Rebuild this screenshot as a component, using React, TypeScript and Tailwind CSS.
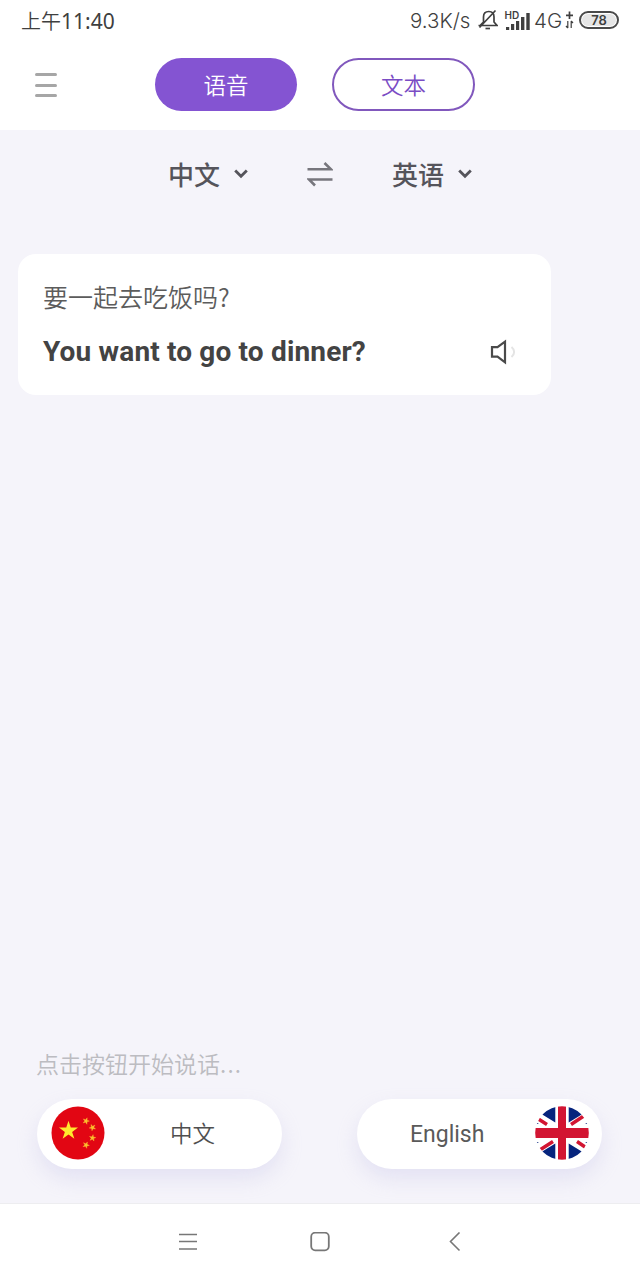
import React from 'react';

const SignalBars = () => (
  <svg width="28" height="24" viewBox="504 6 28 24" fill="#3f3f3f">
    <text x="504.5" y="17" fontSize="10" fontWeight="600" fontFamily="Inter, sans-serif">HD</text>
    <rect x="506" y="25" width="3.2" height="3" />
    <rect x="511" y="22" width="3.2" height="6" />
    <rect x="516" y="19" width="3.2" height="9" />
    <rect x="521" y="15" width="3.4" height="13" />
    <rect x="526.3" y="11" width="3.4" height="17" />
  </svg>
);

const MutedBell = () => (
  <svg width="20" height="22" viewBox="478 9 20 22" fill="none" stroke="#3f3f3f" strokeWidth="1.7">
    <path d="M478.5 25.5h18.5l-3-3.5v-5c0-3.500-2-5.500-5.200-5.500s-5.300 2-5.300 5.500v5l-3 3M479.500 27.500l16-17" />
    <path d="M485.500 28.500h4.500" />
  </svg>
);

const DataArrows = () => (
  <svg width="9" height="20" viewBox="565 10 9 20" fill="none" stroke="#3f3f3f">
    <path d="M569.500 11.500v7.500M566 15.300h7" strokeWidth="1.7" />
    <path d="M567.800 21v7M566 26l1.800 2M571.200 28v-7M573 23l-1.800-2" strokeWidth="1.200" />
  </svg>
);

const StatusBar = () => (
  <div className="flex h-10 shrink-0 items-center pl-[21px] pr-[21px] text-[20px] text-[#3f3f3f]">
    <span className="mt-[3px] whitespace-nowrap font-[350]">
      上午<span className="font-['Noto_Sans'] text-[21px] font-normal">11:40</span>
    </span>
    <div className="ml-auto flex items-center whitespace-nowrap font-[Inter]">
      <span className="mt-0.5 w-[68px] text-[20.5px] font-[350]">9.3K/s</span>
      <MutedBell />
      <span className="ml-1.5"><SignalBars /></span>
      <span className="ml-[2px] mt-0.5 w-[31px] text-[20.5px] font-[350]">4G</span>
      <DataArrows />
      <span className="ml-[5px] flex h-[18px] w-10 items-center justify-center rounded-full border-2 border-[#4a4a4a] bg-white p-px text-[13px] font-semibold leading-none">
        <span className="flex h-full w-full items-center justify-center rounded-full bg-[#e6e6e6]">78</span>
      </span>
    </div>
  </div>
);

const Header = () => (
  <div className="flex h-[90px] shrink-0 items-start bg-white pl-[35px] pt-[18px] text-[22.5px] font-[350]">
    <button className="mt-[15px] flex flex-col gap-[7.5px]">
      <span className="h-[3px] w-[22px] rounded-sm bg-[#a6a6a6]" />
      <span className="h-[3px] w-[22px] rounded-sm bg-[#a6a6a6]" />
      <span className="h-[3px] w-[22px] rounded-sm bg-[#a6a6a6]" />
    </button>
    <button className="ml-[98px] h-[53px] w-[142px] rounded-full bg-[#8454d2] text-white">语音</button>
    <button className="ml-[35px] h-[53px] w-[143px] rounded-full border-2 border-[#8158bd] text-[#7a4cc4]">文本</button>
  </div>
);

interface LanguageProps {
  label: string;
}

const LanguageSelect: React.FC<LanguageProps> = ({ label }) => (
  <button className="flex items-center gap-[14px] text-[26px] font-medium text-[#55545b]">
    <span className="-mt-px">{label}</span>
    <svg width="14" height="10" viewBox="0 0 14 10" fill="none" stroke="#55545b" strokeWidth="2.800">
      <path d="M1.200 1.500L7 7.200l5.800-5.700" />
    </svg>
  </button>
);

const LanguageBar = () => (
  <div className="flex h-[88px] items-center pl-[168px]">
    <LanguageSelect label="中文" />
    <svg className="ml-[59px] mr-[59px]" width="26" height="26" viewBox="0 0 26 26" fill="none" stroke="#77767d" strokeWidth="2.600">
      <path d="M.5 8.300h23.500L17.500 2M25.500 18.500H2l6 6" />
    </svg>
    <LanguageSelect label="英语" />
  </div>
);

const SpeakerIcon = () => (
  <svg width="28" height="26" viewBox="0 0 28 26" fill="none">
    <path d="M3 8.200h5.500L16 2.700v20.600L8.500 17.600H3z" stroke="#4a4a4a" strokeWidth="2.200" />
    <path d="M22.500 8c3.500 2.800 3.500 7.200 0 10" stroke="#e4e4e4" strokeWidth="2" />
  </svg>
);

const TranslationCard = () => (
  <div className="ml-[18px] mt-[36px] h-[141px] w-[533px] rounded-[18px] bg-white pl-[25px] pt-[24px]">
    <p className="text-[25px] font-[350] leading-9 text-[#5c5c5c]">要一起去吃饭吗?</p>
    <div className="mt-[20px] flex items-center justify-between pr-[34px]">
      <p className="whitespace-nowrap font-[Roboto] text-[28px] font-bold leading-9 tracking-[0.16px] text-[#434343]">
        You want to go to dinner?
      </p>
      <SpeakerIcon />
    </div>
  </div>
);

const STAR = '0,-10 2.245,-3.090 9.511,-3.090 3.633,1.180 5.878,8.090 0,3.820 -5.878,8.090 -3.633,1.180 -9.511,-3.090 -2.245,-3.090';

const smallStars = [
  { x: 35, y: 15, angle: 20 },
  { x: 41.500, y: 21.500, angle: 45 },
  { x: 41.500, y: 32, angle: 10 },
  { x: 35, y: 39, angle: 25 },
];

const ChinaFlag = () => (
  <svg width="54" height="54" viewBox="0 0 54 54">
    <circle cx="27" cy="27" r="26.500" fill="#e20613" />
    <polygon points={STAR} fill="#ffe92e" transform="translate(17.500 24.700)" />
    {smallStars.map((star) => (
      <polygon
        key={star.y}
        points={STAR}
        fill="#fbc02d"
        stroke="#fbc02d"
        transform={`translate(${star.x} ${star.y}) rotate(${star.angle}) scale(.34)`}
      />
    ))}
  </svg>
);

const UkFlag = () => (
  <svg width="54" height="54" viewBox="0 0 54 54">
    <defs>
      <clipPath id="uk-round">
        <circle cx="27" cy="27" r="26.800" />
      </clipPath>
    </defs>
    <g clipPath="url(#uk-round)">
      <path fill="#fff" d="M0 0h54v54H0z" />
      <path fill="#06247d" d="M20.300 0v16.500L4 6.500V0zM33.700 0v16.500L50 6.500V0zM20.300 54V37.500L4 47.500v6.500zM33.700 54V37.500L50 47.500v6.500z" />
      <path fill="#06247d" d="M0 16l4 2H0zM54 16l-4 2H54zM0 38l4-2H0zM54 38l-4-2H54z" />
      <path stroke="#d21532" strokeWidth="3.500" d="M1 11.500l11 7M51 8.500L36 18.500M4 44.500L18 35.500M53 43L42 35.500" />
      <path fill="#d21532" d="M23 0h8v22h23v10H31v22h-8V32H0V22h23z" />
    </g>
  </svg>
);

const SpeakButtons = () => (
  <div className="flex pl-[37px] pt-[19px]">
    <button className="flex h-[70px] w-[245px] items-center rounded-full bg-white pb-[3px] pl-[14px] text-[22.5px] font-[350] text-[#4f4f4f] shadow-[0_10px_20px_rgba(190,185,230,0.3)]">
      <ChinaFlag />
      <span className="ml-[65px] mt-px">中文</span>
    </button>
    <button className="ml-[75px] flex h-[70px] w-[245px] items-center rounded-full bg-white pb-[3px] pl-[53px] pr-[13px] font-[Roboto] text-[23px] text-[#5a5a5a] shadow-[0_10px_20px_rgba(190,185,230,0.3)]">
      <span className="mt-1.5">English</span>
      <span className="ml-auto"><UkFlag /></span>
    </button>
  </div>
);

const NavBar = () => (
  <div className="flex h-[77px] shrink-0 items-center border-t border-[#ededf0] bg-white pl-[178px]">
    <svg width="20" height="20" viewBox="0 0 20 20" stroke="#777" strokeWidth="1.600">
      <path d="M1 2.500h18M1 9.500h18M1 17h18" />
    </svg>
    <svg className="ml-[112px]" width="20" height="20" viewBox="0 0 20 20" fill="none" stroke="#777" strokeWidth="1.800">
      <rect x="1.200" y=".700" width="17.600" height="17.600" rx="4" />
    </svg>
    <svg className="ml-[118px]" width="14" height="20" viewBox="0 0 14 20" fill="none" stroke="#777" strokeWidth="1.600">
      <path d="M11.500 .500L2.500 9.500l9 9" />
    </svg>
  </div>
);

const App: React.FC = () => {
  return (
    <div className="flex h-[1280px] w-[640px] flex-col overflow-hidden bg-white font-['Noto_Sans_CJK_SC',sans-serif]">
      <StatusBar />
      <Header />
      <div className="flex flex-1 flex-col bg-[#f5f4fa]">
        <LanguageBar />
        <TranslationCard />
        <div className="mt-auto pb-[34px]">
          <p className="-mt-px pb-px pl-9 text-[23px] font-[350] leading-8 text-[#bcbcc1]">
            点击按钮开始说话<span className="tracking-[1.2px]">...</span>
          </p>
          <SpeakButtons />
        </div>
      </div>
      <NavBar />
    </div>
  );
};

export default App;
